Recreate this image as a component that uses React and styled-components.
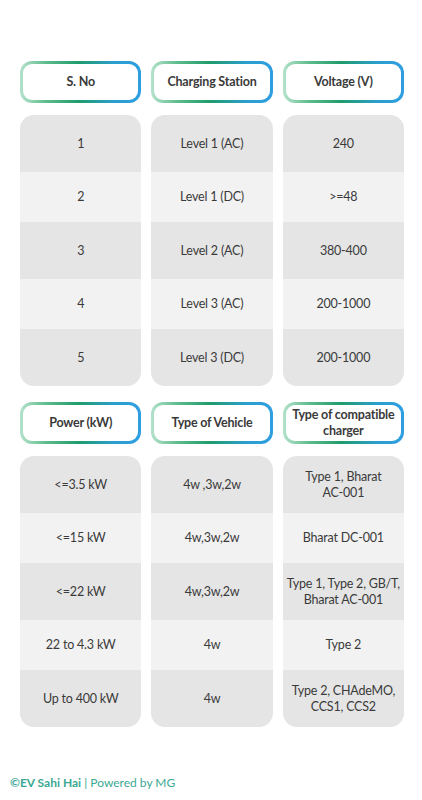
import styled, { createGlobalStyle } from 'styled-components'

const GlobalStyle = createGlobalStyle`
  body {
    margin: 0;
    background: #ffffff;
    font-family: Lato, "Open Sans", sans-serif;
    color: #3a3a3a;
  }
`

const Page = styled.div`
  width: 422px;
  height: 800px;
  box-sizing: border-box;
  padding: 61px 18px 0 20px;
  display: flex;
  flex-direction: column;
`

const Block = styled.div`
  display: grid;
  grid-template-columns: repeat(3, 1fr);
  column-gap: 10px;
  margin-bottom: 16px;
`

const Column = styled.div`
  display: flex;
  flex-direction: column;
  gap: 12px;
`

const Header = styled.div`
  height: 42px;
  box-sizing: border-box;
  border: 3px solid transparent;
  border-radius: 12px;
  background:
    linear-gradient(#fff, #fff) padding-box,
    linear-gradient(90deg, #b4e2cc 0%, #5dbb8c 22%, #1f9c6b 48%, #2a9fce 78%, #2e9ee2 100%) border-box;
  display: flex;
  align-items: center;
  justify-content: center;
  text-align: center;
  font-size: 12.5px;
  font-weight: 700;
  letter-spacing: -0.2px;
  line-height: 16px;
  color: #3a3a3a;
  padding: 0 1px;
`

const Card = styled.div`
  border-radius: 14px;
  overflow: hidden;
  display: flex;
  flex-direction: column;
`

const Cell = styled.div`
  height: ${p => (p.$odd ? 57 : 50)}px;
  background: ${p => (p.$odd ? '#e5e5e5' : '#f2f2f2')};
  display: flex;
  flex-direction: column;
  align-items: center;
  justify-content: center;
  text-align: center;
  font-size: 12.5px;
  letter-spacing: -0.2px;
  line-height: 16px;
  color: #3a3a3a;
  padding: 0 2px;
`

const Line = styled.span`
  white-space: nowrap;
`

const Footer = styled.div`
  margin-top: auto;
  margin-left: -10px;
  margin-bottom: 10px;
  font-size: 12px;
  color: #3aa893;
`

const Brand = styled.span`
  font-weight: 700;
`

const topTable = [
  { title: 'S. No', cells: ['1', '2', '3', '4', '5'] },
  { title: 'Charging Station', cells: ['Level 1 (AC)', 'Level 1 (DC)', 'Level 2 (AC)', 'Level 3 (AC)', 'Level 3 (DC)'] },
  { title: 'Voltage (V)', cells: ['240', '>=48', '380-400', '200-1000', '200-1000'] },
]

const bottomTable = [
  { title: 'Power (kW)', cells: ['<=3.5 kW', '<=15 kW', '<=22 kW', '22 to 4.3 kW', 'Up to 400 kW'] },
  { title: 'Type of Vehicle', cells: ['4w ,3w,2w', '4w,3w,2w', '4w,3w,2w', '4w', '4w'] },
  {
    title: 'Type of compatible charger',
    cells: [
      ['Type 1, Bharat', 'AC-001'],
      'Bharat DC-001',
      ['Type 1, Type 2, GB/T,', 'Bharat AC-001'],
      'Type 2',
      ['Type 2, CHAdeMO,', 'CCS1, CCS2'],
    ],
  },
]

function Table({ columns }) {
  return (
    <Block>
      {columns.map(col => (
        <Column key={col.title}>
          <Header>{col.title}</Header>
          <Card>
            {col.cells.map((c, i) => (
              <Cell key={i} $odd={i % 2 === 0}>
                {[].concat(c).map(line => <Line key={line}>{line}</Line>)}
              </Cell>
            ))}
          </Card>
        </Column>
      ))}
    </Block>
  )
}

export default function App() {
  return (
    <>
      <GlobalStyle />
      <Page>
        <Table columns={topTable} />
        <Table columns={bottomTable} />
        <Footer>
          <Brand>©EV Sahi Hai</Brand> | Powered by MG
        </Footer>
      </Page>
    </>
  )
}
